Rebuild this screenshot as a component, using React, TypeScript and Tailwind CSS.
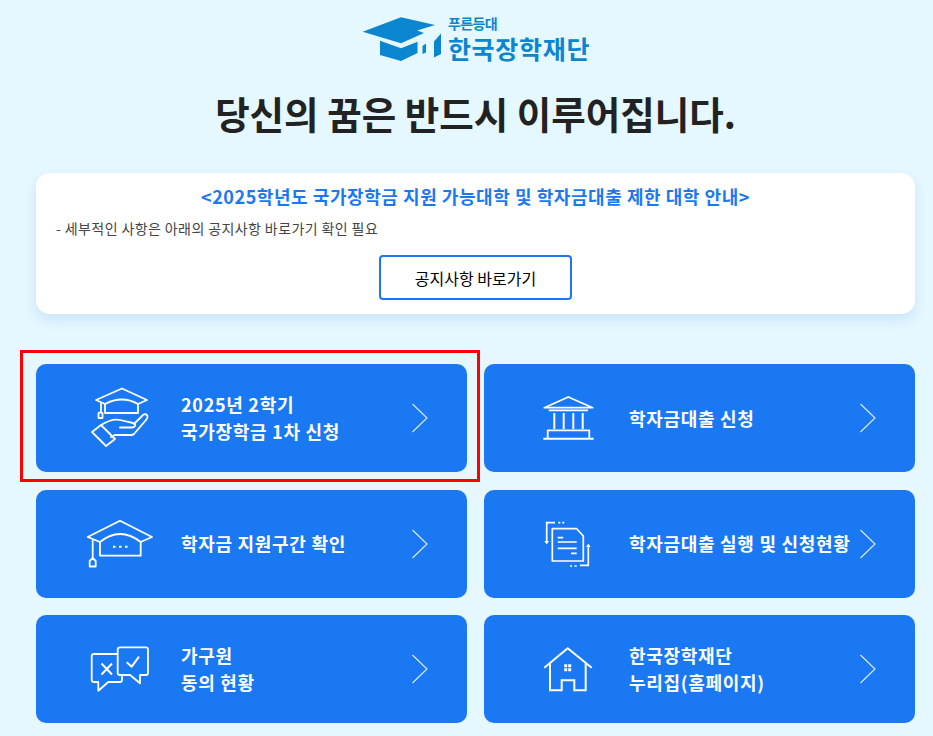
import React from 'react'

const FONT = "font-['Noto_Sans_CJK_KR','Noto_Sans',sans-serif]"

function Chevron() {
  return (
    <svg width="18" height="30" viewBox="0 0 18 30" fill="none" stroke="#d6e8ff" strokeWidth="1.2" className="shrink-0">
      <path d="M1.500 1 L16 15 L1.500 29" />
    </svg>
  )
}

function HandCapIcon() {
  return (
    <svg width="60" height="62" viewBox="20 12 60 62" fill="none" stroke="#fff" strokeWidth="1.800" strokeLinejoin="round" strokeLinecap="round">
      <path d="M35 29 L26 25 L52 13.500 L77 25 L68 29" />
      <path d="M35 29 Q52 20 68 29 V38 H35 Z" />
      <path d="M31 28 V37" />
      <path d="M28.500 43 V38 Q30.500 37 32.500 38 V43 Z" />
      <path d="M31 50 Q42 43 50 45 L63 48 Q66 49 65 51 Q64 52.500 62 52.500 H50" />
      <path d="M64 49 L73 40 Q76 38 77.500 41 Q78 43 76 45 L64 59 Q63 60 61 60 H45 L41 62" />
      <path d="M22 57 L31 50 L45 64 L36 71 Z" />
    </svg>
  )
}

function CapIcon() {
  return (
    <svg width="70" height="52" viewBox="15 13 70 52" fill="none" stroke="#fff" strokeWidth="1.800" strokeLinejoin="round">
      <path d="M30 37 L17.700 32 L50 15.700 L82 32 L70.700 37" />
      <path d="M30 37 Q50 21 70.700 37 V50.700 H30 Z" />
      <path d="M22.700 35 V53" />
      <path d="M19.700 61.500 V56 L22.700 53 L25.700 56 V61.500 Z" />
      <path d="M43 41.700 H45.500 M49 41.700 H51.500 M55 41.700 H57.500" strokeWidth="2" />
    </svg>
  )
}

function ChatIcon() {
  return (
    <svg width="64" height="50" viewBox="18 14 64 50" fill="none" stroke="#fff" strokeWidth="1.800" strokeLinejoin="round">
      <path d="M47.700 24 H24 Q21.700 24 21.700 26 V50 Q21.700 52 24 52 H28.300 V60.700 L38.300 52 H50 Q52 52 52 50 V45" />
      <path d="M50 17.300 H76 Q78 17.300 78 19.300 V43 Q78 45 76 45 H70 V53.300 L60 45 H50 Q47.700 45 47.700 43 V19.300 Q47.700 17.300 50 17.300 Z" />
      <path d="M31.500 33.500 L42 44.500 M42 33.500 L31.500 44.500" strokeWidth="2" />
      <path d="M56.700 32.300 L61.700 36.700 L69 26.700" strokeWidth="2" />
    </svg>
  )
}

function BankIcon() {
  return (
    <svg width="55" height="46" viewBox="15 14 55 46" fill="none" stroke="#fff" strokeWidth="1.800" strokeLinejoin="round">
      <path d="M42.300 16 L66.700 26.700 H18.300 Z" />
      <path d="M22.700 29.300 H62" />
      <path d="M28.300 32 V48 M37.700 32 V48 M47.300 32 V48 M56.700 32 V48" strokeWidth="2" />
      <path d="M21.700 57 V49.300 H63.300 V57" />
      <path d="M17.300 57.700 H67.700" strokeWidth="2" />
    </svg>
  )
}

function DocsIcon() {
  return (
    <svg width="50" height="48" viewBox="18 14 50 48" fill="none" stroke="#fff" strokeWidth="1.700">
      <path d="M27.300 22.700 H51.700 L58.300 30 V55 H27.300 Z" strokeLinejoin="round" />
      <path d="M32.700 31.700 H38.300 M32.700 36 H51.700 M32.700 42.300 H51.700 M46 47.300 H51.700" />
      <path d="M30 16.700 H21.700 V35" />
      <path d="M19.300 35 H24 L21.700 38.500 Z" fill="#fff" stroke="none" />
      <path d="M33.300 16.700 H35.300 M37.300 16.700 H39.300" />
      <path d="M63.300 41 V59.300 H55" />
      <path d="M61 41 H65.700 L63.300 37.500 Z" fill="#fff" stroke="none" />
      <path d="M45 60 H47 M49.500 60 H51.700" />
    </svg>
  )
}

function HouseIcon() {
  return (
    <svg width="52" height="47" viewBox="17 15 52 47" fill="none" stroke="#fff" strokeWidth="2">
      <path d="M19.300 36.700 L42.700 17.300 L66.700 36.700" strokeLinejoin="round" />
      <path d="M25 31.500 V59.300 H36.700 V49.300 H49.300 V59.300 H60.700 V31.500" />
      <path d="M39.200 33.200 H42.200 V36.200 H39.200 Z M43.200 33.200 H46.200 V36.200 H43.200 Z M39.200 37.200 H42.200 V40.200 H39.200 Z M43.200 37.200 H46.200 V40.200 H43.200 Z" fill="#fff" stroke="none" />
    </svg>
  )
}

function MenuCard({ icon, lines, selected }: { icon: React.ReactNode; lines: string[]; selected?: boolean }) {
  return (
    <div className="relative">
      <a className="flex items-center h-[108px] rounded-[10px] bg-[#1a79f2] text-white">
        <div className="w-[145px] shrink-0 flex items-center justify-center pl-[23px]">{icon}</div>
        <div className="flex-1 text-[18px] leading-[27px] font-bold tracking-[0.7px] whitespace-nowrap">
          {lines.map(l => <div key={l}>{l}</div>)}
        </div>
        <div className="w-[56px] shrink-0"><Chevron /></div>
      </a>
      {selected && <div className="absolute left-[-16px] top-[-14px] w-[460px] h-[132px] border-[3px] border-[#f00]" />}
    </div>
  )
}

export default function App() {
  return (
    <div className={`min-h-[736px] bg-[#e5f7ff] pl-[36px] pr-[18px] text-[#222] overflow-hidden ${FONT}`}>
      <div className="flex justify-center pt-[15px] gap-[5px] h-[64px]">
        <svg width="82" height="48" viewBox="20 15 82 48">
          <path d="M60 17.300 L94 25 L76 30.500 L83 33 L60 43.300 L21.700 31.700 Z" fill="#0a86d0" />
          <path d="M39 40.700 L60 48.300 L76.500 41.700 V53 L60 61 L39 55 Z" fill="#0a86d0" />
          <path d="M81.500 46 L85 43.500 V52.500 L81.500 54 Z M93 41.500 L100 33.500 V54 L93 57.500 Z" fill="#0a86d0" />
        </svg>
        <div className="text-[#0a86d0] font-bold mt-[1px]">
          <div className="text-[14px] leading-[15px] tracking-[-0.6px]">푸른등대</div>
          <div className="text-[25px] leading-[28px] tracking-[0.7px] mt-[3px]">한국장학재단</div>
        </div>
      </div>

      <h1 className="text-[37.500px] leading-[50px] font-bold text-center mt-[24px]">당신의 꿈은 반드시 이루어집니다.</h1>

      <div className="mt-[35px] h-[141px] rounded-[14px] bg-white shadow-[0_6px_12px_rgba(60,130,220,0.15)] px-[20px] pt-[10px]">
        <p className="text-center text-[18px] leading-[26px] font-bold tracking-[0.55px] text-[#1a79f2]">&lt;2025학년도 국가장학금 지원 가능대학 및 학자금대출 제한 대학 안내&gt;</p>
        <p className="text-[14px] leading-[20px] tracking-[0.4px] text-[#444] mt-[9px]">- 세부적인 사항은 아래의 공지사항 바로가기 확인 필요</p>
        <div className="flex justify-center mt-[17px]">
          <button className="w-[193px] h-[45px] rounded-[4px] border-2 border-[#1a79f2] bg-white text-[16px] text-black">공지사항 바로가기</button>
        </div>
      </div>

      <div className="mt-[50px] grid grid-cols-2 gap-x-[17px] gap-y-[17.500px]">
        <MenuCard selected icon={<HandCapIcon />} lines={['2025년 2학기', '국가장학금 1차 신청']} />
        <MenuCard icon={<BankIcon />} lines={['학자금대출 신청']} />
        <MenuCard icon={<CapIcon />} lines={['학자금 지원구간 확인']} />
        <MenuCard icon={<DocsIcon />} lines={['학자금대출 실행 및 신청현황']} />
        <MenuCard icon={<ChatIcon />} lines={['가구원', '동의 현황']} />
        <MenuCard icon={<HouseIcon />} lines={['한국장학재단', '누리집(홈페이지)']} />
      </div>
    </div>
  )
}
